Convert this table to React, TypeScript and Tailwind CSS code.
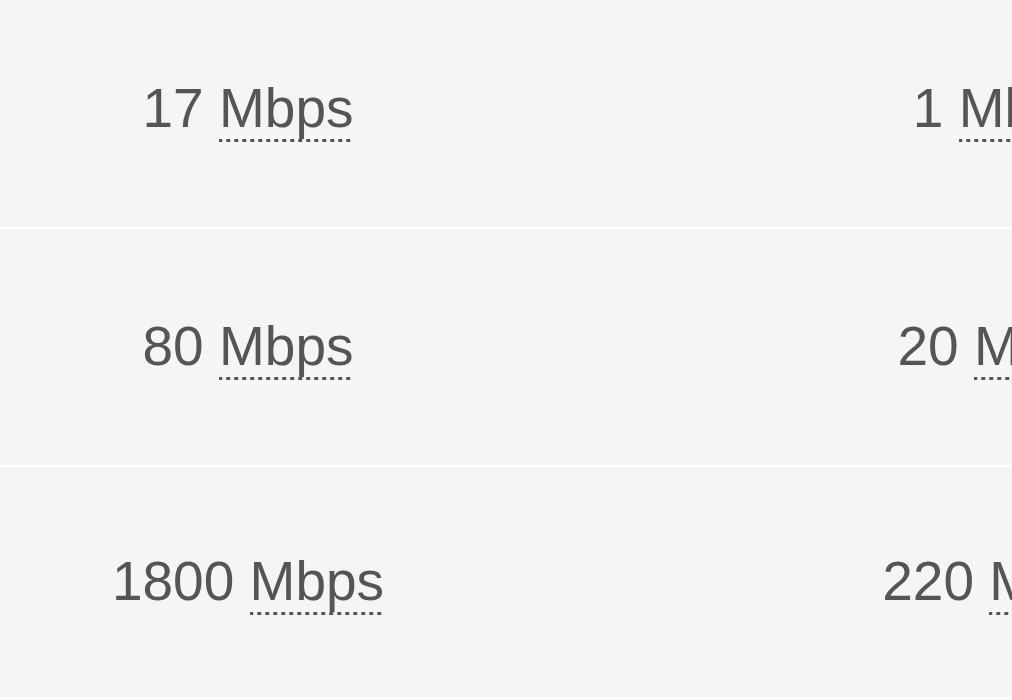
const rows = [
  { down: '17', up: '1', h: 'h-[238px]' },
  { down: '80', up: '20', h: 'h-[238px]' },
  { down: '1800', up: '220', h: 'h-[232px]' },
];

function Speed({ value }: { value: string }) {
  return (
    <span>
      {value}{' '}
      <abbr
        title="Megabits per second"
        className="no-underline pb-[3px] bg-[linear-gradient(to_right,#555555_50%,transparent_50%)] bg-[length:8px_3px] bg-repeat-x bg-bottom"
      >
        Mbps
      </abbr>
    </span>
  );
}

export default function App() {
  return (
    <div className="w-[1012px] h-[700px] overflow-hidden bg-[#f5f5f5] text-[#555555] font-['Liberation_Sans',Arial,sans-serif]">
      <div className="-mt-[9px]">
        {rows.map((r) => (
          <div key={r.down} className={`flex ${r.h} border-b-2 border-white text-[55px] leading-none`}>
            <div className="w-[496px] shrink-0 flex items-center justify-center pb-[1px]">
              <Speed value={r.down} />
            </div>
            <div className="w-[1014px] shrink-0 flex items-center justify-center pb-[1px]">
              <Speed value={r.up} />
            </div>
          </div>
        ))}
      </div>
    </div>
  );
}
